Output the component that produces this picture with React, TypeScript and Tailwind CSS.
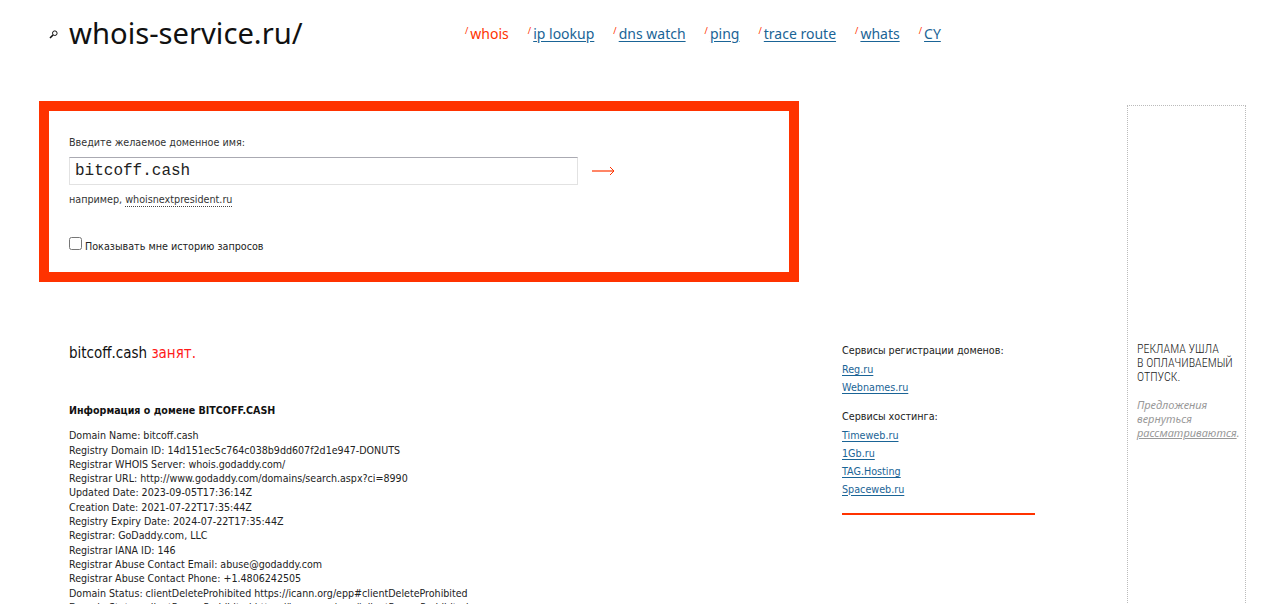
import React from "react"

const navItems = ["whois", "ip lookup", "dns watch", "ping", "trace route", "whats", "CY"]

const whoisLines = [
  "Domain Name: bitcoff.cash",
  "Registry Domain ID: 14d151ec5c764c038b9dd607f2d1e947-DONUTS",
  "Registrar WHOIS Server: whois.godaddy.com/",
  "Registrar URL: http://www.godaddy.com/domains/search.aspx?ci=8990",
  "Updated Date: 2023-09-05T17:36:14Z",
  "Creation Date: 2021-07-22T17:35:44Z",
  "Registry Expiry Date: 2024-07-22T17:35:44Z",
  "Registrar: GoDaddy.com, LLC",
  "Registrar IANA ID: 146",
  "Registrar Abuse Contact Email: abuse@godaddy.com",
  "Registrar Abuse Contact Phone: +1.4806242505",
  "Domain Status: clientDeleteProhibited https://icann.org/epp#clientDeleteProhibited",
  "Domain Status: clientRenewProhibited https://icann.org/epp#clientRenewProhibited",
]

const regLinks = ["Reg.ru", "Webnames.ru"]
const hostLinks = ["Timeweb.ru", "1Gb.ru", "TAG.Hosting", "Spaceweb.ru"]

function SideLink({ label }: { label: string }) {
  return (
    <a href="#" className="block text-[#1a6496] underline underline-offset-2 leading-[17.7px]">
      {label}
    </a>
  )
}

export default function App() {
  return (
    <div className="h-[604px] overflow-hidden bg-white text-[10.7px] leading-[14.3px] text-[#222] font-['DejaVu_Sans',sans-serif] font-stretch-condensed">
      {/* header */}
      <header className="flex h-[101px] items-start pl-[49px] pt-[14px]">
        <svg width="9" height="9" viewBox="0 0 9 9" fill="none" className="mt-[16px] mr-[11px]">
          <circle cx="5.8" cy="3.2" r="2.3" stroke="#111" strokeWidth="1" />
          <path d="M4 5L1 8" stroke="#111" strokeWidth="1.6" />
        </svg>
        <h1 className="w-[396px] font-['Noto_Sans',sans-serif] text-[29.2px] leading-[38px] text-[#111]">
          whois-service.ru/
        </h1>
        <nav className="flex gap-[19px] pt-[10px] font-['Noto_Sans',sans-serif] text-[14px] leading-[20px]">
          {navItems.map((item, i) => (
            <span key={item} className="flex">
              <span className="mr-[2px] -mt-[3px] text-[9px] text-[#ff3300]">/</span>
              {i === 0 ? (
                <span className="text-[#ff3300]">{item}</span>
              ) : (
                <a href="#" className="text-[#1a6496] underline underline-offset-2">
                  {item}
                </a>
              )}
            </span>
          ))}
        </nav>
      </header>

      <div className="flex">
        <div className="w-[1088px] shrink-0 pl-[39px]">
          {/* search form */}
          <form className="h-[181px] w-[760px] border-[10px] border-[#ff3300] pl-[20px] pt-[25px]">
            <label className="block leading-[14px] text-[#333]">Введите желаемое доменное имя:</label>
            <div className="mt-[7px] flex items-center">
              <input
                readOnly
                value="bitcoff.cash"
                className="h-[28px] w-[509px] border border-[#e2e2e2] border-t-[#aaaab2] px-[5px] font-['Liberation_Mono',monospace] text-[16px] text-[#222] outline-none"
              />
              <svg width="24" height="10" viewBox="0 0 24 10" className="ml-[14px]">
                <path d="M0 5H21" stroke="#ff3300" strokeOpacity="0.6" strokeWidth="2" />
                <path d="M18 1L22 5L18 9" fill="none" stroke="#ff3300" strokeWidth="1" />
              </svg>
            </div>
            <p className="mt-[8px] leading-[14px] text-[#333]">
              например,{" "}
              <a href="#" className="border-b border-dotted border-[#444]">
                whoisnextpresident.ru
              </a>
            </p>
            <label className="mt-[30px] flex items-start text-[#222]">
              <input type="checkbox" className="m-0 mr-[3px] size-[13px]" />
              <span className="mt-[3px]">Показывать мне историю запросов</span>
            </label>
          </form>

          {/* result */}
          <div className="mt-[61px] flex pl-[30px]">
            <div className="w-[773px] shrink-0">
              <p className="text-[15px] leading-[20px] text-[#111]">
                bitcoff.cash <span className="text-[#ff1a1a]">занят.</span>
              </p>
              <h2 className="mt-[40px] text-[10.6px] font-bold text-[#111]">Информация о домене BITCOFF.CASH</h2>
              <div className="mt-[11px] whitespace-pre text-[10.6px] text-[#222]">
                {whoisLines.map((line) => (
                  <div key={line}>{line}</div>
                ))}
              </div>
            </div>

            {/* registrars */}
            <aside className="w-[193px] pt-[1px]">
              <h3 className="leading-[14px] text-[#222]">Сервисы регистрации доменов:</h3>
              <div className="mt-[3px]">
                {regLinks.map((l) => (
                  <SideLink key={l} label={l} />
                ))}
              </div>
              <h3 className="mt-[14px] leading-[14px] text-[#222]">Сервисы хостинга:</h3>
              <div className="mt-[3px]">
                {hostLinks.map((l) => (
                  <SideLink key={l} label={l} />
                ))}
              </div>
              <div className="mt-[15px] h-[2px] bg-[#ff3300]" />
            </aside>
          </div>
        </div>

        {/* ad column */}
        <aside className="mt-[4px] ml-[39px] h-[600px] w-[119px] shrink-0 border border-dotted border-[#bbb] pl-[9px] pt-[236px]">
          <p className="font-['Roboto',sans-serif] whitespace-pre text-[12px] font-light leading-[14px] text-[#222]">
            {"РЕКЛАМА УШЛА\nВ ОПЛАЧИВАЕМЫЙ\nОТПУСК."}
          </p>
          <p className="mt-[14px] font-['Noto_Sans',sans-serif] text-[11px] italic leading-[14px] text-[#999]">
            Предложения вернуться <a href="#" className="underline">рассматриваются</a>.
          </p>
        </aside>
      </div>
    </div>
  )
}
